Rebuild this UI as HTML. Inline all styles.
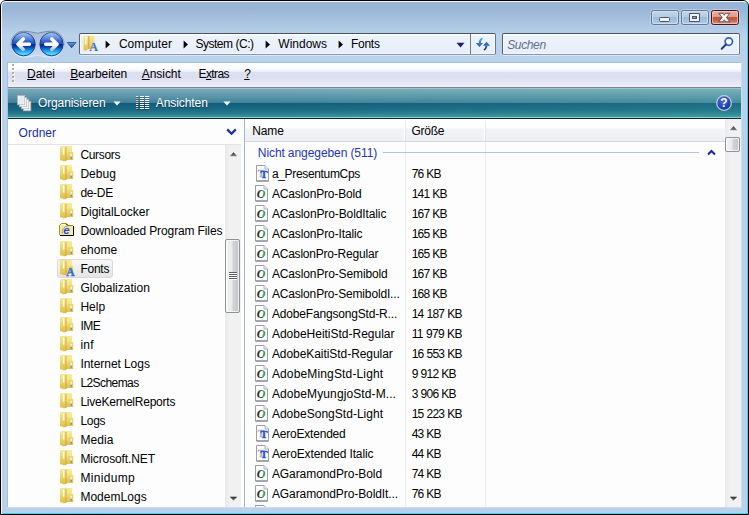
<!DOCTYPE html>
<html lang="de"><head><meta charset="utf-8"><title>Fonts</title><style>
html,body{margin:0;padding:0;background:#fff}
body{width:749px;height:515px;position:relative;overflow:hidden;font:12px 'Liberation Sans',sans-serif}
.abs{position:absolute;display:block}
.t{position:absolute;white-space:pre;line-height:14px;height:14px;font:12px/14px 'Liberation Sans',sans-serif}
.t u{text-decoration:underline;text-underline-offset:1px}
.win{position:absolute;left:0;top:0;width:747px;height:513px;border:1px solid #000;border-radius:6px 6px 0 0;background:linear-gradient(#98b4d4 0,#9ab6d6 8px,#b9d1ea 34px,#b9d1ea 100%)}
.hl{position:absolute;left:1px;top:1px;width:745px;height:511px;border-radius:5px 5px 0 0;border-left:1px solid #f4f8fc;border-top:1px solid #f4f8fc;border-right:1px solid #43d2f0;border-bottom:1px solid #43d2f0}
.addr{position:absolute;box-sizing:border-box;border:1px solid #56627a;border-top-color:#485466;border-right-color:#687488;border-bottom-color:#8b97aa;border-radius:2px;background:linear-gradient(#fbfdff 0,#fbfdff 1px,#ecf2fa 2px,#eaf1fa 50%,#e7eef8 100%);box-shadow:0 1px 0 rgba(255,255,255,.5),inset 1px 0 0 #f7faff,inset -1px 0 0 #f7faff,inset 0 -1px 0 #f4f8fd}
.thumb{position:absolute;border:1px solid #8f9196;border-radius:2px;background:linear-gradient(90deg,#f5f5f5 0,#e9e9ea 45%,#d2d3d6 55%,#c4c5c9 100%);box-shadow:inset 0 0 0 1px rgba(255,255,255,.7)}
.sel{position:absolute;border:1px solid #d9d9d9;border-radius:3px;background:linear-gradient(#f8f8f8,#e5e5e5)}
</style></head><body>
<div class="win"></div>
<div class="hl"></div>
<svg class="abs" style="left:648px;top:7px" width="96" height="22" viewBox="648 7 96 22">
<defs>
<linearGradient id="cb" x1="0" y1="0" x2="0" y2="1"><stop offset="0" stop-color="#c3d6ec"/><stop offset=".48" stop-color="#b3cbe6"/><stop offset=".5" stop-color="#9fbbdb"/><stop offset="1" stop-color="#b0cae6"/></linearGradient>
<linearGradient id="cr" x1="0" y1="0" x2="0" y2="1"><stop offset="0" stop-color="#ebb2a3"/><stop offset=".46" stop-color="#e29a88"/><stop offset=".47" stop-color="#c1583a"/><stop offset=".68" stop-color="#c55f43"/><stop offset=".86" stop-color="#d7846c"/><stop offset="1" stop-color="#e6a392"/></linearGradient>
</defs>
<rect x="650.5" y="9.5" width="29" height="16" rx="3.5" fill="none" stroke="#cfe0f3" stroke-opacity=".55"/>
<rect x="680.5" y="9.5" width="29" height="16" rx="3.5" fill="none" stroke="#cfe0f3" stroke-opacity=".55"/>
<rect x="710.5" y="9.5" width="29" height="16" rx="3.5" fill="none" stroke="#cfe0f3" stroke-opacity=".55"/>
<rect x="651.5" y="10.5" width="27" height="14" rx="2" fill="url(#cb)" stroke="#64748f"/>
<rect x="652.5" y="11.5" width="25" height="12" rx="1.5" fill="none" stroke="#d7e6f6" stroke-opacity=".75"/>
<rect x="681.5" y="10.5" width="27" height="14" rx="2" fill="url(#cb)" stroke="#64748f"/>
<rect x="682.5" y="11.5" width="25" height="12" rx="1.5" fill="none" stroke="#d7e6f6" stroke-opacity=".75"/>
<rect x="711.5" y="10.5" width="27" height="14" rx="2" fill="url(#cr)" stroke="#4b1226"/>
<rect x="712.5" y="11.5" width="25" height="12" rx="1.5" fill="none" stroke="#f5cdbf" stroke-opacity=".7"/>
<rect x="659.5" y="17.5" width="10" height="4" rx="1" fill="#f2f2f2" stroke="#4a5468"/>
<path d="M689.5 13.5h10v8h-10z" fill="#f2f2f2" stroke="#4a5468"/><rect x="692.5" y="16.5" width="4" height="2" fill="#8aa3c4" stroke="#4a5468"/>
<path d="M718.800 13.300h4.300l1.200 1.900 1.200-1.900h4.300l-3.300 4.200 3.400 4.300h-4.300l-1.300-2-1.300 2h-4.300l3.400-4.300z" fill="#f7f7f7" stroke="#454a5e" stroke-width=".9" stroke-linejoin="round"/>
</svg>
<svg class="abs" style="left:6px;top:28px" width="74" height="34" viewBox="6 28 74 34">
<defs>
<linearGradient id="nb" x1="0" y1="0" x2="0" y2="1"><stop offset="0" stop-color="#86aeee"/><stop offset=".1" stop-color="#5b8ce0"/><stop offset=".3" stop-color="#3b6fd2"/><stop offset=".49" stop-color="#2555c0"/><stop offset=".5" stop-color="#0a2488"/><stop offset=".6" stop-color="#0b3aa0"/><stop offset=".74" stop-color="#1488dc"/><stop offset=".88" stop-color="#3cc8fb"/><stop offset="1" stop-color="#7fe8ff"/></linearGradient>
<linearGradient id="ng" x1="0" y1="0" x2="0" y2="1"><stop offset="0" stop-color="#fff" stop-opacity=".4"/><stop offset="1" stop-color="#fff" stop-opacity="0"/></linearGradient>
<linearGradient id="band" x1="0" y1="0" x2="0" y2="1"><stop offset="0" stop-color="#a7bad4"/><stop offset=".5" stop-color="#b6cbe5"/><stop offset="1" stop-color="#cbddf1"/></linearGradient>
<linearGradient id="bs" x1="0" y1="0" x2="0" y2="1"><stop offset="0" stop-color="#74839c"/><stop offset=".5" stop-color="#9db1cb"/><stop offset="1" stop-color="#e3eefa"/></linearGradient>
<linearGradient id="dd" x1="0" y1="0" x2="0" y2="1"><stop offset="0" stop-color="#6aa6ea"/><stop offset="1" stop-color="#143f96"/></linearGradient>
<linearGradient id="aw" x1="0" y1="0" x2="0" y2="1"><stop offset="0" stop-color="#fff"/><stop offset=".55" stop-color="#fff"/><stop offset="1" stop-color="#b9c4d4"/></linearGradient>
</defs>
<path d="M23.600 31.200a13 13 0 0 0 0 26q5.500-.1 13.900-1.800q8.400 1.700 13.900 1.800a13 13 0 0 0 0-26q-5.500 .1-13.900 2q-8.400-1.900-13.900-2z" fill="url(#band)" stroke="url(#bs)" stroke-width=".9"/>
<circle cx="23.600" cy="44.200" r="11.600" fill="url(#nb)" stroke="#1b3c94" stroke-width="1"/>
<path d="M13.300 41.500a10.400 10.400 0 0 1 20.600 0q-10.300 -3 -20.600 0z" fill="url(#ng)"/>
<circle cx="51.500" cy="44.200" r="11.600" fill="url(#nb)" stroke="#1b3c94" stroke-width="1"/>
<path d="M41.200 41.500a10.400 10.400 0 0 1 20.600 0q-10.300 -3 -20.600 0z" fill="url(#ng)"/>
<g fill="none" stroke="url(#aw)" stroke-width="3.500" stroke-linecap="round" stroke-linejoin="round">
<path d="M23.300 38.900l-5.300 5.300 5.300 5.300M19 44.200h10.400"/>
<path d="M51.800 38.900l5.300 5.300-5.300 5.300M56.100 44.200h-10.400"/>
</g>
<path d="M67.300 42.500h8.600l-4.300 5.300z" fill="url(#dd)" stroke="#1c4184" stroke-width=".8"/>
</svg>
<div class="addr" style="left:79px;top:33px;width:417px;height:22px"></div>
<div class="addr" style="left:502px;top:33px;width:238px;height:22px"></div>
<div style="position:absolute;left:470px;top:34px;width:1px;height:20px;background:#6d7a8e"></div>
<svg class="abs" style="left:82px;top:34px" width="18" height="18" viewBox="0 0 18 18">
<defs><linearGradient id="fa" x1="0" y1="0" x2="0" y2="1"><stop offset="0" stop-color="#f6eba0"/><stop offset="1" stop-color="#dfbf48"/></linearGradient></defs>
<path d="M1.500 2.500q0-1 1-1h9q1 0 1 1v12.500h-6.500l-1.500 1.500h-2q-1 0-1-1z" fill="url(#fa)"/>
<path d="M6.800 2v13" stroke="#c9a63c" stroke-width="1"/>
<path d="M3.800 2.500v8" stroke="#fffbe0" stroke-width="1.600" opacity=".9"/>
<text x="7.200" y="16.800" font-family="'Liberation Serif',serif" font-weight="bold" font-size="12" fill="#2f6fe0">A</text>
</svg>
<svg class="abs" style="left:105.4px;top:40px" width="6" height="9" viewBox="0 0 6 9"><path d="M.6.600l4.400 3.900-4.400 3.900z" fill="#000"/></svg>
<svg class="abs" style="left:182.8px;top:40px" width="6" height="9" viewBox="0 0 6 9"><path d="M.6.600l4.400 3.900-4.400 3.900z" fill="#000"/></svg>
<svg class="abs" style="left:265.4px;top:40px" width="6" height="9" viewBox="0 0 6 9"><path d="M.6.600l4.400 3.900-4.400 3.900z" fill="#000"/></svg>
<svg class="abs" style="left:337.8px;top:40px" width="6" height="9" viewBox="0 0 6 9"><path d="M.6.600l4.400 3.900-4.400 3.900z" fill="#000"/></svg>
<span class="t" style="left:118.9px;top:37px;color:#000;letter-spacing:0.056px">Computer</span>
<span class="t" style="left:195.4px;top:37px;color:#000;letter-spacing:-0.480px;word-spacing:0.191px">System (C:)</span>
<span class="t" style="left:278.3px;top:37px;color:#000;letter-spacing:0.006px">Windows</span>
<span class="t" style="left:350.9px;top:37px;color:#000;letter-spacing:-0.236px">Fonts</span>
<svg class="abs" style="left:456px;top:42px" width="9" height="6" viewBox="0 0 9 6"><path d="M.5.800h8l-4 4.600z" fill="#1a1f6e"/></svg>
<svg class="abs" style="left:474px;top:36px" width="18" height="17" viewBox="474 36 18 17">
<defs><linearGradient id="r1" x1="0" y1="0" x2="0" y2="1"><stop offset="0" stop-color="#45a8e8"/><stop offset="1" stop-color="#2a60b8"/></linearGradient>
<linearGradient id="r2" x1="0" y1="0" x2="0" y2="1"><stop offset="0" stop-color="#3572c8"/><stop offset=".6" stop-color="#2858b0"/><stop offset="1" stop-color="#0e1c58"/></linearGradient></defs>
<path d="M475.700 42.900h7.400l-3.700 4.100zM478.600 43.200q.3-4 3.600-5.400l.6 1q-2 1.300-2 4.400z" fill="url(#r1)"/>
<path d="M482.900 45.700h7.200l-3.600-4zM487.500 45.500q-.3 3.700-3.400 5l-.6-.9q2-1.300 2-4.100z" fill="url(#r2)"/>
</svg>
<span class="t" style="left:507.2px;top:38px;color:#5f6f8c;letter-spacing:-0.359px;font-style:italic">Suchen</span>
<svg class="abs" style="left:719px;top:36px" width="16" height="15" viewBox="0 0 16 15">
<circle cx="9.800" cy="5.600" r="3.700" fill="#fff" fill-opacity=".6" stroke="#2f62b4" stroke-width="1.700"/>
<path d="M7 8.500l-4.300 4.300" stroke="#1f3f7c" stroke-width="2" stroke-linecap="round"/>
</svg>
<div style="position:absolute;left:7px;top:62px;width:735px;height:446px;background:#c9dcf2"></div>
<div style="position:absolute;left:7px;top:62px;width:734px;height:445px;background:#a5bedd"></div>
<div style="position:absolute;left:8px;top:63px;width:733px;height:24px;background:linear-gradient(#fff 0,#fdfdfe 5px,#f2f3fa 8px,#dde0f0 9.500px,#dbdeef 14px,#e3e6f3 19px,#ecedf8 23px,#f0f1fa 24px)"></div>
<div style="position:absolute;left:13px;top:65px;width:2px;height:2px;background:#fff"></div>
<div style="position:absolute;left:12px;top:64px;width:2px;height:2px;background:#a9abbb"></div>
<div style="position:absolute;left:13px;top:69px;width:2px;height:2px;background:#fff"></div>
<div style="position:absolute;left:12px;top:68px;width:2px;height:2px;background:#a9abbb"></div>
<div style="position:absolute;left:13px;top:73px;width:2px;height:2px;background:#fff"></div>
<div style="position:absolute;left:12px;top:72px;width:2px;height:2px;background:#a9abbb"></div>
<div style="position:absolute;left:13px;top:77px;width:2px;height:2px;background:#fff"></div>
<div style="position:absolute;left:12px;top:76px;width:2px;height:2px;background:#a9abbb"></div>
<div style="position:absolute;left:13px;top:81px;width:2px;height:2px;background:#fff"></div>
<div style="position:absolute;left:12px;top:80px;width:2px;height:2px;background:#a9abbb"></div>
<span class="t" style="left:27.1px;top:67px;color:#000;letter-spacing:-0.050px"><u>D</u>atei</span>
<span class="t" style="left:70.2px;top:67px;color:#000;letter-spacing:-0.125px"><u>B</u>earbeiten</span>
<span class="t" style="left:141.8px;top:67px;color:#000;letter-spacing:-0.063px"><u>A</u>nsicht</span>
<span class="t" style="left:198.5px;top:67px;color:#000;letter-spacing:-0.604px">E<u>x</u>tras</span>
<span class="t" style="left:244.2px;top:67px;color:#000;letter-spacing:-1.309px"><u>?</u></span>
<div style="position:absolute;left:8px;top:87px;width:733px;height:32px;background:#0a2f40"></div>
<div style="position:absolute;left:8px;top:87px;width:733px;height:1px;background:#85808f"></div>
<div style="position:absolute;left:8px;top:88px;width:733px;height:30px;background:linear-gradient(90deg,rgba(100,215,180,0) 0,rgba(100,215,180,.03) 35%,rgba(100,215,180,.16) 100%),linear-gradient(#9cc5cc 0,#9cc5cc 1px,#7aa8b8 1.500px,#5f97ac 7.500px,#3f8098 14.900px,#0f5878 15px,#1a6a85 22.500px,#2c8090 26.500px,#3a9098 28.500px,#8fcfd2 29px,#8fcfd2 30px)"></div>
<div style="position:absolute;left:8px;top:118px;width:733px;height:1px;background:#0c2b3a"></div>
<svg class="abs" style="left:16px;top:94px" width="17" height="19" viewBox="16 94 17 19">
<defs><linearGradient id="sh" x1="0" y1="0" x2="1" y2="1"><stop offset="0" stop-color="#f4f7fd"/><stop offset=".5" stop-color="#e2e9f6"/><stop offset="1" stop-color="#f1f5fc"/></linearGradient></defs>
<g stroke="#b9b0b4" stroke-width=".8">
<rect x="23.500" y="101.500" width="7.300" height="9.300" fill="#fff"/>
<rect x="21.500" y="99.500" width="7.300" height="9.300" fill="#fff"/>
<rect x="19.500" y="97.500" width="7.300" height="9.300" fill="#fff"/>
<rect x="17.500" y="95.500" width="7.300" height="9.300" fill="url(#sh)"/>
</g></svg>
<span class="t" style="left:37.9px;top:96px;color:#fff;letter-spacing:-0.094px;text-shadow:0 1px 1px rgba(0,30,50,.55)">Organisieren</span>
<svg class="abs" style="left:113px;top:101px" width="8" height="5" viewBox="0 0 8 5"><path d="M.4.400h7.200l-3.600 4.200z" fill="#fff"/></svg>
<svg class="abs" style="left:135px;top:95px" width="16" height="16" viewBox="135 95 16 16"><rect x="136" y="96" width="2.200" height="1" fill="#dbe9c4"/><rect x="140" y="96" width="4" height="1" fill="#fff"/><rect x="145" y="96" width="4.200" height="1" fill="#fff"/><rect x="136" y="97" width="13.200" height="1" fill="#062a44" opacity=".35"/><rect x="136" y="98" width="2.200" height="1" fill="#f19466"/><rect x="140" y="98" width="4" height="1" fill="#fff"/><rect x="145" y="98" width="4.200" height="1" fill="#fff"/><rect x="136" y="99" width="13.200" height="1" fill="#062a44" opacity=".35"/><rect x="136" y="100" width="2.200" height="1" fill="#c3d2f8"/><rect x="140" y="100" width="4" height="1" fill="#fff"/><rect x="145" y="100" width="4.200" height="1" fill="#fff"/><rect x="136" y="101" width="13.200" height="1" fill="#062a44" opacity=".35"/><rect x="136" y="102" width="2.200" height="1" fill="#f1d266"/><rect x="140" y="102" width="4" height="1" fill="#fff"/><rect x="145" y="102" width="4.200" height="1" fill="#fff"/><rect x="136" y="103" width="13.200" height="1" fill="#062a44" opacity=".35"/><rect x="136" y="104" width="2.200" height="1" fill="#f7ee86"/><rect x="140" y="104" width="4" height="1" fill="#fff"/><rect x="145" y="104" width="4.200" height="1" fill="#fff"/><rect x="136" y="105" width="13.200" height="1" fill="#062a44" opacity=".35"/><rect x="136" y="106" width="2.200" height="1" fill="#c9d5f8"/><rect x="140" y="106" width="4" height="1" fill="#fff"/><rect x="145" y="106" width="4.200" height="1" fill="#fff"/><rect x="136" y="107" width="13.200" height="1" fill="#062a44" opacity=".35"/><rect x="136" y="108" width="2.200" height="1" fill="#f19a72"/><rect x="140" y="108" width="4" height="1" fill="#fff"/><rect x="145" y="108" width="4.200" height="1" fill="#fff"/><rect x="136" y="109" width="13.200" height="1" fill="#062a44" opacity=".35"/></svg>
<span class="t" style="left:155.8px;top:96px;color:#fff;letter-spacing:-0.081px;text-shadow:0 1px 1px rgba(0,30,50,.55)">Ansichten</span>
<svg class="abs" style="left:223px;top:101px" width="8" height="5" viewBox="0 0 8 5"><path d="M.4.400h7.200l-3.600 4.200z" fill="#fff"/></svg>
<svg class="abs" style="left:715px;top:94px" width="18" height="18" viewBox="0 0 18 18">
<defs><radialGradient id="hg" cx=".4" cy=".3" r=".8"><stop offset="0" stop-color="#4a6fe0"/><stop offset="1" stop-color="#0c2a9a"/></radialGradient></defs>
<circle cx="9" cy="9" r="7.300" fill="url(#hg)" stroke="#c9cfd6" stroke-width="1.200"/>
<text x="9" y="13.200" text-anchor="middle" font-family="'Liberation Sans',sans-serif" font-weight="bold" font-size="12" fill="#fff">?</text>
</svg>
<div style="position:absolute;left:8px;top:119px;width:733px;height:388px;background:#fdfdfd"></div>
<span class="t" style="left:18.6px;top:126px;color:#1c2fa3;letter-spacing:0.024px">Ordner</span>
<svg class="abs" style="left:226px;top:128px" width="11" height="8" viewBox="0 0 11 8"><path d="M1.200 1.400l4.300 4.300 4.300-4.300" fill="none" stroke="#1b2b9b" stroke-width="2.200"/></svg>
<div style="position:absolute;left:8px;top:144px;width:233px;height:1px;background:#e2e3e6"></div>
<div style="position:absolute;left:244px;top:119px;width:1px;height:388px;background:#a5b6cc"></div>
<div style="position:absolute;left:225px;top:145px;width:16px;height:362px;background:linear-gradient(90deg,#e9e9e9,#f1f1f1 30%,#f1f1f1)"></div>
<svg class="abs" style="left:229px;top:151px" width="9" height="6" viewBox="0 0 9 6"><defs><linearGradient id="ar" x1="0" y1="0" x2="0" y2="1"><stop offset="0" stop-color="#222"/><stop offset="1" stop-color="#888"/></linearGradient></defs><path d="M4.500 1.200l3.700 4h-7.400z" fill="url(#ar)"/></svg>
<svg class="abs" style="left:229px;top:496px" width="9" height="6" viewBox="0 0 9 6"><defs><linearGradient id="ar2" x1="0" y1="0" x2="0" y2="1"><stop offset="0" stop-color="#222"/><stop offset="1" stop-color="#999"/></linearGradient></defs><path d="M.8.800h7.400l-3.700 4z" fill="url(#ar2)"/></svg>
<div class="thumb" style="left:225px;top:239px;width:13px;height:71.500px"></div>
<div style="position:absolute;left:229px;top:272px;width:8px;height:1px;background:#5e6068"></div>
<div style="position:absolute;left:229px;top:273px;width:8px;height:1px;background:#f8f8f8"></div>
<div style="position:absolute;left:229px;top:274px;width:8px;height:1px;background:#5e6068"></div>
<div style="position:absolute;left:229px;top:275px;width:8px;height:1px;background:#f8f8f8"></div>
<div style="position:absolute;left:229px;top:276px;width:8px;height:1px;background:#5e6068"></div>
<div style="position:absolute;left:229px;top:277px;width:8px;height:1px;background:#f8f8f8"></div>
<div style="position:absolute;left:229px;top:278px;width:8px;height:1px;background:#5e6068"></div>
<div style="position:absolute;left:229px;top:279px;width:8px;height:1px;background:#f8f8f8"></div>
<svg class="abs" style="left:59px;top:145px" width="16" height="18" viewBox="0 0 16 18">
<path d="M1 2q0-1 1-1h10q1 0 1 1v4.800h.6q.6 0 .6.600v7q0 .6-.6.600h-6l-1.400 1.200h-2l-.8-.7h-1.400q-1 0-1-1z" fill="url(#fb)"/>
<path d="M7.600 1.200h4.600q.8 0 .8.800v5h-5.400z" fill="#fdf7b0" opacity=".35"/>
<path d="M7 2v14" stroke="#c4a238" stroke-width="1" opacity=".8"/>
<path d="M4.600 2.300v7.300" stroke="#fffef4" stroke-width="1.500" opacity=".95"/>
<path d="M8.200 2.500v8" stroke="#f6e89a" stroke-width=".7" opacity=".8"/>
<rect x="11.600" y="8.800" width="1.100" height="3" fill="#fff"/><rect x="11.600" y="11.600" width="1.100" height="2.200" fill="#2a8fe6"/>
</svg>
<span class="t" style="left:80.4px;top:148px;color:#000;letter-spacing:-0.320px">Cursors</span>
<svg class="abs" style="left:59px;top:164px" width="16" height="18" viewBox="0 0 16 18">
<path d="M1 2q0-1 1-1h10q1 0 1 1v4.800h.6q.6 0 .6.600v7q0 .6-.6.600h-6l-1.400 1.200h-2l-.8-.7h-1.400q-1 0-1-1z" fill="url(#fb)"/>
<path d="M7.600 1.200h4.600q.8 0 .8.800v5h-5.400z" fill="#fdf7b0" opacity=".35"/>
<path d="M7 2v14" stroke="#c4a238" stroke-width="1" opacity=".8"/>
<path d="M4.600 2.300v7.300" stroke="#fffef4" stroke-width="1.500" opacity=".95"/>
<path d="M8.200 2.500v8" stroke="#f6e89a" stroke-width=".7" opacity=".8"/>
<rect x="11.600" y="8.800" width="1.100" height="3" fill="#fff"/><rect x="11.600" y="11.600" width="1.100" height="2.200" fill="#2a8fe6"/>
</svg>
<span class="t" style="left:80.4px;top:167px;color:#000;letter-spacing:0.042px">Debug</span>
<svg class="abs" style="left:59px;top:183px" width="16" height="18" viewBox="0 0 16 18">
<path d="M1 2q0-1 1-1h10q1 0 1 1v4.800h.6q.6 0 .6.600v7q0 .6-.6.600h-6l-1.400 1.200h-2l-.8-.7h-1.400q-1 0-1-1z" fill="url(#fb)"/>
<path d="M7.600 1.200h4.600q.8 0 .8.800v5h-5.400z" fill="#fdf7b0" opacity=".35"/>
<path d="M7 2v14" stroke="#c4a238" stroke-width="1" opacity=".8"/>
<path d="M4.600 2.300v7.300" stroke="#fffef4" stroke-width="1.500" opacity=".95"/>
<path d="M8.200 2.500v8" stroke="#f6e89a" stroke-width=".7" opacity=".8"/>
<rect x="11.600" y="8.800" width="1.100" height="3" fill="#fff"/><rect x="11.600" y="11.600" width="1.100" height="2.200" fill="#2a8fe6"/>
</svg>
<span class="t" style="left:80.4px;top:186px;color:#000;letter-spacing:-0.311px">de-DE</span>
<svg class="abs" style="left:59px;top:202px" width="16" height="18" viewBox="0 0 16 18">
<path d="M1 2q0-1 1-1h10q1 0 1 1v4.800h.6q.6 0 .6.600v7q0 .6-.6.600h-6l-1.400 1.200h-2l-.8-.7h-1.400q-1 0-1-1z" fill="url(#fb)"/>
<path d="M7.600 1.200h4.600q.8 0 .8.800v5h-5.400z" fill="#fdf7b0" opacity=".35"/>
<path d="M7 2v14" stroke="#c4a238" stroke-width="1" opacity=".8"/>
<path d="M4.600 2.300v7.300" stroke="#fffef4" stroke-width="1.500" opacity=".95"/>
<path d="M8.200 2.500v8" stroke="#f6e89a" stroke-width=".7" opacity=".8"/>
<rect x="11.600" y="8.800" width="1.100" height="3" fill="#fff"/><rect x="11.600" y="11.600" width="1.100" height="2.200" fill="#2a8fe6"/>
</svg>
<span class="t" style="left:80.4px;top:205px;color:#000;letter-spacing:-0.030px">DigitalLocker</span>
<svg class="abs" style="left:58px;top:221px" width="17" height="16" viewBox="58 221 17 16">
<path d="M59.500 235v-9.500l2-2h4.500l1.500 2h5.500v9.500z" fill="#f8ea94"/>
<path d="M68 226h5v9h-5z" fill="#fde9b4" opacity=".7"/>
<path d="M59.500 235v-9.500l2-2h4.500l1.500 2h5.500" fill="none" stroke="#a39a14" stroke-width="1"/>
<path d="M61.500 224.500h4" stroke="#fffef0" stroke-width="1"/>
<path d="M73.500 226v9.500h-13.500" fill="none" stroke="#000" stroke-width="1"/>
<path d="M66.300 223.600l1.400 1.700" stroke="#000" stroke-width="1"/>
<text x="63.200" y="233.800" font-family="'Liberation Sans',sans-serif" font-weight="bold" font-style="italic" font-size="11.500" fill="#1d4fd8">e</text>
<path d="M62.300 233.500q-.8-3.500 2.200-6q2.800-2 5.800-1.600" fill="none" stroke="#2a4fc0" stroke-width=".8" stroke-dasharray="1.200 .8"/>
</svg>
<span class="t" style="left:80.4px;top:224px;color:#000;letter-spacing:-0.097px;word-spacing:-0.192px">Downloaded Program Files</span>
<svg class="abs" style="left:59px;top:240px" width="16" height="18" viewBox="0 0 16 18">
<path d="M1 2q0-1 1-1h10q1 0 1 1v4.800h.6q.6 0 .6.600v7q0 .6-.6.600h-6l-1.400 1.200h-2l-.8-.7h-1.400q-1 0-1-1z" fill="url(#fb)"/>
<path d="M7.600 1.200h4.600q.8 0 .8.800v5h-5.400z" fill="#fdf7b0" opacity=".35"/>
<path d="M7 2v14" stroke="#c4a238" stroke-width="1" opacity=".8"/>
<path d="M4.600 2.300v7.300" stroke="#fffef4" stroke-width="1.500" opacity=".95"/>
<path d="M8.200 2.500v8" stroke="#f6e89a" stroke-width=".7" opacity=".8"/>
<rect x="11.600" y="8.800" width="1.100" height="3" fill="#fff"/><rect x="11.600" y="11.600" width="1.100" height="2.200" fill="#2a8fe6"/>
</svg>
<span class="t" style="left:80.4px;top:243px;color:#000;letter-spacing:-0.002px">ehome</span>
<div class="sel" style="left:57px;top:259px;width:54px;height:17px"></div>
<svg class="abs" style="left:59px;top:259px" width="16" height="18" viewBox="0 0 16 18">
<path d="M1 2q0-1 1-1h10q1 0 1 1v4.800h.6q.6 0 .6.600v7q0 .6-.6.600h-6l-1.400 1.200h-2l-.8-.7h-1.400q-1 0-1-1z" fill="url(#fb)"/>
<path d="M7.600 1.200h4.600q.8 0 .8.800v5h-5.400z" fill="#fdf7b0" opacity=".35"/>
<path d="M7 2v14" stroke="#c4a238" stroke-width="1" opacity=".8"/>
<path d="M4.600 2.300v7.300" stroke="#fffef4" stroke-width="1.500" opacity=".95"/>
<path d="M8.200 2.500v8" stroke="#f6e89a" stroke-width=".7" opacity=".8"/>
<rect x="11.600" y="8.800" width="1.100" height="3" fill="#fff"/><rect x="11.600" y="11.600" width="1.100" height="2.200" fill="#2a8fe6"/>
<text x="7.200" y="16.900" font-family="'Liberation Serif',serif" font-weight="bold" font-size="11.500" fill="#2f6fe0" stroke="#2f6fe0" stroke-width=".3">A</text></svg>
<span class="t" style="left:80.4px;top:262px;color:#000;letter-spacing:-0.236px">Fonts</span>
<svg class="abs" style="left:59px;top:278px" width="16" height="18" viewBox="0 0 16 18">
<path d="M1 2q0-1 1-1h10q1 0 1 1v4.800h.6q.6 0 .6.600v7q0 .6-.6.600h-6l-1.400 1.200h-2l-.8-.7h-1.400q-1 0-1-1z" fill="url(#fb)"/>
<path d="M7.600 1.200h4.600q.8 0 .8.800v5h-5.400z" fill="#fdf7b0" opacity=".35"/>
<path d="M7 2v14" stroke="#c4a238" stroke-width="1" opacity=".8"/>
<path d="M4.600 2.300v7.300" stroke="#fffef4" stroke-width="1.500" opacity=".95"/>
<path d="M8.200 2.500v8" stroke="#f6e89a" stroke-width=".7" opacity=".8"/>
<rect x="11.600" y="8.800" width="1.100" height="3" fill="#fff"/><rect x="11.600" y="11.600" width="1.100" height="2.200" fill="#2a8fe6"/>
</svg>
<span class="t" style="left:80.4px;top:281px;color:#000;letter-spacing:0.007px">Globalization</span>
<svg class="abs" style="left:59px;top:297px" width="16" height="18" viewBox="0 0 16 18">
<path d="M1 2q0-1 1-1h10q1 0 1 1v4.800h.6q.6 0 .6.600v7q0 .6-.6.600h-6l-1.400 1.200h-2l-.8-.7h-1.400q-1 0-1-1z" fill="url(#fb)"/>
<path d="M7.600 1.200h4.600q.8 0 .8.800v5h-5.400z" fill="#fdf7b0" opacity=".35"/>
<path d="M7 2v14" stroke="#c4a238" stroke-width="1" opacity=".8"/>
<path d="M4.600 2.300v7.300" stroke="#fffef4" stroke-width="1.500" opacity=".95"/>
<path d="M8.200 2.500v8" stroke="#f6e89a" stroke-width=".7" opacity=".8"/>
<rect x="11.600" y="8.800" width="1.100" height="3" fill="#fff"/><rect x="11.600" y="11.600" width="1.100" height="2.200" fill="#2a8fe6"/>
</svg>
<span class="t" style="left:80.4px;top:300px;color:#000;letter-spacing:0.017px">Help</span>
<svg class="abs" style="left:59px;top:316px" width="16" height="18" viewBox="0 0 16 18">
<path d="M1 2q0-1 1-1h10q1 0 1 1v4.800h.6q.6 0 .6.600v7q0 .6-.6.600h-6l-1.400 1.200h-2l-.8-.7h-1.400q-1 0-1-1z" fill="url(#fb)"/>
<path d="M7.600 1.200h4.600q.8 0 .8.800v5h-5.400z" fill="#fdf7b0" opacity=".35"/>
<path d="M7 2v14" stroke="#c4a238" stroke-width="1" opacity=".8"/>
<path d="M4.600 2.300v7.300" stroke="#fffef4" stroke-width="1.500" opacity=".95"/>
<path d="M8.200 2.500v8" stroke="#f6e89a" stroke-width=".7" opacity=".8"/>
<rect x="11.600" y="8.800" width="1.100" height="3" fill="#fff"/><rect x="11.600" y="11.600" width="1.100" height="2.200" fill="#2a8fe6"/>
</svg>
<span class="t" style="left:80.4px;top:319px;color:#000;letter-spacing:-0.486px">IME</span>
<svg class="abs" style="left:59px;top:335px" width="16" height="18" viewBox="0 0 16 18">
<path d="M1 2q0-1 1-1h10q1 0 1 1v4.800h.6q.6 0 .6.600v7q0 .6-.6.600h-6l-1.400 1.200h-2l-.8-.7h-1.400q-1 0-1-1z" fill="url(#fb)"/>
<path d="M7.600 1.200h4.600q.8 0 .8.800v5h-5.400z" fill="#fdf7b0" opacity=".35"/>
<path d="M7 2v14" stroke="#c4a238" stroke-width="1" opacity=".8"/>
<path d="M4.600 2.300v7.300" stroke="#fffef4" stroke-width="1.500" opacity=".95"/>
<path d="M8.200 2.500v8" stroke="#f6e89a" stroke-width=".7" opacity=".8"/>
<rect x="11.600" y="8.800" width="1.100" height="3" fill="#fff"/><rect x="11.600" y="11.600" width="1.100" height="2.200" fill="#2a8fe6"/>
</svg>
<span class="t" style="left:80.4px;top:338px;color:#000;letter-spacing:0.253px">inf</span>
<svg class="abs" style="left:59px;top:354px" width="16" height="18" viewBox="0 0 16 18">
<path d="M1 2q0-1 1-1h10q1 0 1 1v4.800h.6q.6 0 .6.600v7q0 .6-.6.600h-6l-1.400 1.200h-2l-.8-.7h-1.400q-1 0-1-1z" fill="url(#fb)"/>
<path d="M7.600 1.200h4.600q.8 0 .8.800v5h-5.400z" fill="#fdf7b0" opacity=".35"/>
<path d="M7 2v14" stroke="#c4a238" stroke-width="1" opacity=".8"/>
<path d="M4.600 2.300v7.300" stroke="#fffef4" stroke-width="1.500" opacity=".95"/>
<path d="M8.200 2.500v8" stroke="#f6e89a" stroke-width=".7" opacity=".8"/>
<rect x="11.600" y="8.800" width="1.100" height="3" fill="#fff"/><rect x="11.600" y="11.600" width="1.100" height="2.200" fill="#2a8fe6"/>
</svg>
<span class="t" style="left:80.4px;top:357px;color:#000;letter-spacing:-0.024px;word-spacing:-0.265px">Internet Logs</span>
<svg class="abs" style="left:59px;top:373px" width="16" height="18" viewBox="0 0 16 18">
<path d="M1 2q0-1 1-1h10q1 0 1 1v4.800h.6q.6 0 .6.600v7q0 .6-.6.600h-6l-1.400 1.200h-2l-.8-.7h-1.400q-1 0-1-1z" fill="url(#fb)"/>
<path d="M7.600 1.200h4.600q.8 0 .8.800v5h-5.400z" fill="#fdf7b0" opacity=".35"/>
<path d="M7 2v14" stroke="#c4a238" stroke-width="1" opacity=".8"/>
<path d="M4.600 2.300v7.300" stroke="#fffef4" stroke-width="1.500" opacity=".95"/>
<path d="M8.200 2.500v8" stroke="#f6e89a" stroke-width=".7" opacity=".8"/>
<rect x="11.600" y="8.800" width="1.100" height="3" fill="#fff"/><rect x="11.600" y="11.600" width="1.100" height="2.200" fill="#2a8fe6"/>
</svg>
<span class="t" style="left:80.4px;top:376px;color:#000;letter-spacing:-0.577px">L2Schemas</span>
<svg class="abs" style="left:59px;top:392px" width="16" height="18" viewBox="0 0 16 18">
<path d="M1 2q0-1 1-1h10q1 0 1 1v4.800h.6q.6 0 .6.600v7q0 .6-.6.600h-6l-1.400 1.200h-2l-.8-.7h-1.400q-1 0-1-1z" fill="url(#fb)"/>
<path d="M7.600 1.200h4.600q.8 0 .8.800v5h-5.400z" fill="#fdf7b0" opacity=".35"/>
<path d="M7 2v14" stroke="#c4a238" stroke-width="1" opacity=".8"/>
<path d="M4.600 2.300v7.300" stroke="#fffef4" stroke-width="1.500" opacity=".95"/>
<path d="M8.200 2.500v8" stroke="#f6e89a" stroke-width=".7" opacity=".8"/>
<rect x="11.600" y="8.800" width="1.100" height="3" fill="#fff"/><rect x="11.600" y="11.600" width="1.100" height="2.200" fill="#2a8fe6"/>
</svg>
<span class="t" style="left:80.4px;top:395px;color:#000;letter-spacing:-0.230px">LiveKernelReports</span>
<svg class="abs" style="left:59px;top:411px" width="16" height="18" viewBox="0 0 16 18">
<path d="M1 2q0-1 1-1h10q1 0 1 1v4.800h.6q.6 0 .6.600v7q0 .6-.6.600h-6l-1.400 1.200h-2l-.8-.7h-1.400q-1 0-1-1z" fill="url(#fb)"/>
<path d="M7.600 1.200h4.600q.8 0 .8.800v5h-5.400z" fill="#fdf7b0" opacity=".35"/>
<path d="M7 2v14" stroke="#c4a238" stroke-width="1" opacity=".8"/>
<path d="M4.600 2.300v7.300" stroke="#fffef4" stroke-width="1.500" opacity=".95"/>
<path d="M8.200 2.500v8" stroke="#f6e89a" stroke-width=".7" opacity=".8"/>
<rect x="11.600" y="8.800" width="1.100" height="3" fill="#fff"/><rect x="11.600" y="11.600" width="1.100" height="2.200" fill="#2a8fe6"/>
</svg>
<span class="t" style="left:80.4px;top:414px;color:#000;letter-spacing:-0.303px">Logs</span>
<svg class="abs" style="left:59px;top:430px" width="16" height="18" viewBox="0 0 16 18">
<path d="M1 2q0-1 1-1h10q1 0 1 1v4.800h.6q.6 0 .6.600v7q0 .6-.6.600h-6l-1.400 1.200h-2l-.8-.7h-1.400q-1 0-1-1z" fill="url(#fb)"/>
<path d="M7.600 1.200h4.600q.8 0 .8.800v5h-5.400z" fill="#fdf7b0" opacity=".35"/>
<path d="M7 2v14" stroke="#c4a238" stroke-width="1" opacity=".8"/>
<path d="M4.600 2.300v7.300" stroke="#fffef4" stroke-width="1.500" opacity=".95"/>
<path d="M8.200 2.500v8" stroke="#f6e89a" stroke-width=".7" opacity=".8"/>
<rect x="11.600" y="8.800" width="1.100" height="3" fill="#fff"/><rect x="11.600" y="11.600" width="1.100" height="2.200" fill="#2a8fe6"/>
</svg>
<span class="t" style="left:80.4px;top:433px;color:#000;letter-spacing:0.086px">Media</span>
<svg class="abs" style="left:59px;top:449px" width="16" height="18" viewBox="0 0 16 18">
<path d="M1 2q0-1 1-1h10q1 0 1 1v4.800h.6q.6 0 .6.600v7q0 .6-.6.600h-6l-1.400 1.200h-2l-.8-.7h-1.400q-1 0-1-1z" fill="url(#fb)"/>
<path d="M7.600 1.200h4.600q.8 0 .8.800v5h-5.400z" fill="#fdf7b0" opacity=".35"/>
<path d="M7 2v14" stroke="#c4a238" stroke-width="1" opacity=".8"/>
<path d="M4.600 2.300v7.300" stroke="#fffef4" stroke-width="1.500" opacity=".95"/>
<path d="M8.200 2.500v8" stroke="#f6e89a" stroke-width=".7" opacity=".8"/>
<rect x="11.600" y="8.800" width="1.100" height="3" fill="#fff"/><rect x="11.600" y="11.600" width="1.100" height="2.200" fill="#2a8fe6"/>
</svg>
<span class="t" style="left:80.4px;top:452px;color:#000;letter-spacing:-0.118px">Microsoft.NET</span>
<svg class="abs" style="left:59px;top:468px" width="16" height="18" viewBox="0 0 16 18">
<path d="M1 2q0-1 1-1h10q1 0 1 1v4.800h.6q.6 0 .6.600v7q0 .6-.6.600h-6l-1.400 1.200h-2l-.8-.7h-1.400q-1 0-1-1z" fill="url(#fb)"/>
<path d="M7.600 1.200h4.600q.8 0 .8.800v5h-5.400z" fill="#fdf7b0" opacity=".35"/>
<path d="M7 2v14" stroke="#c4a238" stroke-width="1" opacity=".8"/>
<path d="M4.600 2.300v7.300" stroke="#fffef4" stroke-width="1.500" opacity=".95"/>
<path d="M8.200 2.500v8" stroke="#f6e89a" stroke-width=".7" opacity=".8"/>
<rect x="11.600" y="8.800" width="1.100" height="3" fill="#fff"/><rect x="11.600" y="11.600" width="1.100" height="2.200" fill="#2a8fe6"/>
</svg>
<span class="t" style="left:80.4px;top:471px;color:#000;letter-spacing:0.320px">Minidump</span>
<svg class="abs" style="left:59px;top:487px" width="16" height="18" viewBox="0 0 16 18">
<path d="M1 2q0-1 1-1h10q1 0 1 1v4.800h.6q.6 0 .6.600v7q0 .6-.6.600h-6l-1.400 1.200h-2l-.8-.7h-1.400q-1 0-1-1z" fill="url(#fb)"/>
<path d="M7.600 1.200h4.600q.8 0 .8.800v5h-5.400z" fill="#fdf7b0" opacity=".35"/>
<path d="M7 2v14" stroke="#c4a238" stroke-width="1" opacity=".8"/>
<path d="M4.600 2.300v7.300" stroke="#fffef4" stroke-width="1.500" opacity=".95"/>
<path d="M8.200 2.500v8" stroke="#f6e89a" stroke-width=".7" opacity=".8"/>
<rect x="11.600" y="8.800" width="1.100" height="3" fill="#fff"/><rect x="11.600" y="11.600" width="1.100" height="2.200" fill="#2a8fe6"/>
</svg>
<span class="t" style="left:80.4px;top:490px;color:#000;letter-spacing:0.026px">ModemLogs</span>
<div style="position:absolute;left:245px;top:119px;width:480px;height:22px;background:linear-gradient(#fff 0,#fff 40%,#f2f3f7 45%,#eff0f5 100%)"></div>
<div style="position:absolute;left:245px;top:141px;width:480px;height:1px;background:#d6d7da"></div>
<div style="position:absolute;left:405px;top:119px;width:1px;height:22px;background:linear-gradient(#f4f4f6,#d8d9dd)"></div>
<div style="position:absolute;left:404px;top:119px;width:1px;height:22px;background:#fff"></div>
<div style="position:absolute;left:405px;top:142px;width:1px;height:365px;background:#efeff0"></div>
<div style="position:absolute;left:485px;top:119px;width:1px;height:22px;background:linear-gradient(#f4f4f6,#d8d9dd)"></div>
<div style="position:absolute;left:484px;top:119px;width:1px;height:22px;background:#fff"></div>
<div style="position:absolute;left:485px;top:142px;width:1px;height:365px;background:#efeff0"></div>
<span class="t" style="left:252.2px;top:124px;color:#000;letter-spacing:-0.083px">Name</span>
<span class="t" style="left:411.5px;top:124px;color:#000;letter-spacing:-0.290px">Größe</span>
<span class="t" style="left:257.8px;top:146px;color:#1e35ad;letter-spacing:-0.065px;word-spacing:-0.224px">Nicht angegeben (511)</span>
<div style="position:absolute;left:383px;top:152px;width:316px;height:1px;background:#b4c3e6"></div>
<svg class="abs" style="left:707px;top:149px" width="9" height="7" viewBox="0 0 9 7"><path d="M1 5.600l3.500-3.600 3.500 3.600" fill="none" stroke="#1b2b9b" stroke-width="2.100"/></svg>
<svg class="abs" width="0" height="0"><defs><linearGradient id="fb" x1="0" y1="0" x2="0" y2="1"><stop offset="0" stop-color="#f5e88e"/><stop offset=".5" stop-color="#ecd568"/><stop offset="1" stop-color="#e0bd46"/></linearGradient><linearGradient id="og" x1="0" y1="0" x2="1" y2="0"><stop offset="0" stop-color="#222"/><stop offset=".5" stop-color="#333"/><stop offset=".6" stop-color="#2f9a4a"/><stop offset="1" stop-color="#2f9a4a"/></linearGradient></defs></svg>
<svg class="abs" style="left:255px;top:165px" width="15" height="17" viewBox="0 0 15 17">
<path d="M1.500.500h8.500l3.500 3.500v12h-12z" fill="#fff" stroke="#9ba0a8"/>
<path d="M1.500 16h12" stroke="#747c88" stroke-width="1"/>
<path d="M10 .500v3.500h3.500" fill="#f2f4f8" stroke="#9ba0a8" stroke-width=".8"/>
<text x="2.800" y="11.900" font-family="'Liberation Serif',serif" font-weight="bold" font-size="10" fill="#b4b4b8" stroke="#b4b4b8" stroke-width=".3">T</text>
<text x="5.600" y="13" font-family="'Liberation Serif',serif" font-weight="bold" font-size="10.500" fill="#2a4fd2" stroke="#2a4fd2" stroke-width=".45">T</text>
</svg>
<span class="t" style="left:271.9px;top:167px;color:#000;letter-spacing:-0.334px">a_PresentumCps</span>
<span class="t" style="left:411.7px;top:167px;color:#000;letter-spacing:-0.864px;word-spacing:0.575px">76 KB</span>
<svg class="abs" style="opacity:.999;left:254px;top:185px" width="15" height="17" viewBox="0 0 15 17">
<path d="M1.500.500h8.500l3.500 3.500v12h-12z" fill="#fff" stroke="#9ba0a8"/>
<path d="M1.500 16h12" stroke="#747c88" stroke-width="1"/>
<path d="M10 .500v3.500h3.500" fill="#f2f4f8" stroke="#9ba0a8" stroke-width=".8"/>
<text x="2.800" y="13.200" font-family="'Liberation Serif',serif" font-style="italic" font-weight="bold" font-size="12" fill="url(#og)">O</text>
</svg>
<span class="t" style="left:271.9px;top:187px;color:#000;letter-spacing:-0.158px">ACaslonPro-Bold</span>
<span class="t" style="left:411.7px;top:187px;color:#000;letter-spacing:-0.819px;word-spacing:0.530px">141 KB</span>
<svg class="abs" style="opacity:.999;left:254px;top:205px" width="15" height="17" viewBox="0 0 15 17">
<path d="M1.500.500h8.500l3.500 3.500v12h-12z" fill="#fff" stroke="#9ba0a8"/>
<path d="M1.500 16h12" stroke="#747c88" stroke-width="1"/>
<path d="M10 .500v3.500h3.500" fill="#f2f4f8" stroke="#9ba0a8" stroke-width=".8"/>
<text x="2.800" y="13.200" font-family="'Liberation Serif',serif" font-style="italic" font-weight="bold" font-size="12" fill="url(#og)">O</text>
</svg>
<span class="t" style="left:271.9px;top:207px;color:#000;letter-spacing:-0.110px">ACaslonPro-BoldItalic</span>
<span class="t" style="left:411.7px;top:207px;color:#000;letter-spacing:-0.819px;word-spacing:0.530px">167 KB</span>
<svg class="abs" style="opacity:.999;left:254px;top:225px" width="15" height="17" viewBox="0 0 15 17">
<path d="M1.500.500h8.500l3.500 3.500v12h-12z" fill="#fff" stroke="#9ba0a8"/>
<path d="M1.500 16h12" stroke="#747c88" stroke-width="1"/>
<path d="M10 .500v3.500h3.500" fill="#f2f4f8" stroke="#9ba0a8" stroke-width=".8"/>
<text x="2.800" y="13.200" font-family="'Liberation Serif',serif" font-style="italic" font-weight="bold" font-size="12" fill="url(#og)">O</text>
</svg>
<span class="t" style="left:271.9px;top:227px;color:#000;letter-spacing:-0.128px">ACaslonPro-Italic</span>
<span class="t" style="left:411.7px;top:227px;color:#000;letter-spacing:-0.819px;word-spacing:0.530px">165 KB</span>
<svg class="abs" style="opacity:.999;left:254px;top:245px" width="15" height="17" viewBox="0 0 15 17">
<path d="M1.500.500h8.500l3.500 3.500v12h-12z" fill="#fff" stroke="#9ba0a8"/>
<path d="M1.500 16h12" stroke="#747c88" stroke-width="1"/>
<path d="M10 .500v3.500h3.500" fill="#f2f4f8" stroke="#9ba0a8" stroke-width=".8"/>
<text x="2.800" y="13.200" font-family="'Liberation Serif',serif" font-style="italic" font-weight="bold" font-size="12" fill="url(#og)">O</text>
</svg>
<span class="t" style="left:271.9px;top:247px;color:#000;letter-spacing:-0.210px">ACaslonPro-Regular</span>
<span class="t" style="left:411.7px;top:247px;color:#000;letter-spacing:-0.819px;word-spacing:0.530px">165 KB</span>
<svg class="abs" style="opacity:.999;left:254px;top:265px" width="15" height="17" viewBox="0 0 15 17">
<path d="M1.500.500h8.500l3.500 3.500v12h-12z" fill="#fff" stroke="#9ba0a8"/>
<path d="M1.500 16h12" stroke="#747c88" stroke-width="1"/>
<path d="M10 .500v3.500h3.500" fill="#f2f4f8" stroke="#9ba0a8" stroke-width=".8"/>
<text x="2.800" y="13.200" font-family="'Liberation Serif',serif" font-style="italic" font-weight="bold" font-size="12" fill="url(#og)">O</text>
</svg>
<span class="t" style="left:271.9px;top:267px;color:#000;letter-spacing:-0.122px">ACaslonPro-Semibold</span>
<span class="t" style="left:411.7px;top:267px;color:#000;letter-spacing:-0.819px;word-spacing:0.530px">167 KB</span>
<svg class="abs" style="opacity:.999;left:254px;top:285px" width="15" height="17" viewBox="0 0 15 17">
<path d="M1.500.500h8.500l3.500 3.500v12h-12z" fill="#fff" stroke="#9ba0a8"/>
<path d="M1.500 16h12" stroke="#747c88" stroke-width="1"/>
<path d="M10 .500v3.500h3.500" fill="#f2f4f8" stroke="#9ba0a8" stroke-width=".8"/>
<text x="2.800" y="13.200" font-family="'Liberation Serif',serif" font-style="italic" font-weight="bold" font-size="12" fill="url(#og)">O</text>
</svg>
<span class="t" style="left:271.9px;top:287px;color:#000;letter-spacing:-0.159px">ACaslonPro-SemiboldI...</span>
<span class="t" style="left:411.7px;top:287px;color:#000;letter-spacing:-0.819px;word-spacing:0.530px">168 KB</span>
<svg class="abs" style="opacity:.999;left:254px;top:305px" width="15" height="17" viewBox="0 0 15 17">
<path d="M1.500.500h8.500l3.500 3.500v12h-12z" fill="#fff" stroke="#9ba0a8"/>
<path d="M1.500 16h12" stroke="#747c88" stroke-width="1"/>
<path d="M10 .500v3.500h3.500" fill="#f2f4f8" stroke="#9ba0a8" stroke-width=".8"/>
<text x="2.800" y="13.200" font-family="'Liberation Serif',serif" font-style="italic" font-weight="bold" font-size="12" fill="url(#og)">O</text>
</svg>
<span class="t" style="left:271.9px;top:307px;color:#000;letter-spacing:-0.170px">AdobeFangsongStd-R...</span>
<span class="t" style="left:411.7px;top:307px;color:#000;letter-spacing:-0.766px;word-spacing:0.476px">14 187 KB</span>
<svg class="abs" style="opacity:.999;left:254px;top:325px" width="15" height="17" viewBox="0 0 15 17">
<path d="M1.500.500h8.500l3.500 3.500v12h-12z" fill="#fff" stroke="#9ba0a8"/>
<path d="M1.500 16h12" stroke="#747c88" stroke-width="1"/>
<path d="M10 .500v3.500h3.500" fill="#f2f4f8" stroke="#9ba0a8" stroke-width=".8"/>
<text x="2.800" y="13.200" font-family="'Liberation Serif',serif" font-style="italic" font-weight="bold" font-size="12" fill="url(#og)">O</text>
</svg>
<span class="t" style="left:271.9px;top:327px;color:#000;letter-spacing:-0.007px">AdobeHeitiStd-Regular</span>
<span class="t" style="left:411.7px;top:327px;color:#000;letter-spacing:-0.638px;word-spacing:0.349px">11 979 KB</span>
<svg class="abs" style="opacity:.999;left:254px;top:345px" width="15" height="17" viewBox="0 0 15 17">
<path d="M1.500.500h8.500l3.500 3.500v12h-12z" fill="#fff" stroke="#9ba0a8"/>
<path d="M1.500 16h12" stroke="#747c88" stroke-width="1"/>
<path d="M10 .500v3.500h3.500" fill="#f2f4f8" stroke="#9ba0a8" stroke-width=".8"/>
<text x="2.800" y="13.200" font-family="'Liberation Serif',serif" font-style="italic" font-weight="bold" font-size="12" fill="url(#og)">O</text>
</svg>
<span class="t" style="left:271.9px;top:347px;color:#000;letter-spacing:-0.057px">AdobeKaitiStd-Regular</span>
<span class="t" style="left:411.7px;top:347px;color:#000;letter-spacing:-0.766px;word-spacing:0.476px">16 553 KB</span>
<svg class="abs" style="opacity:.999;left:254px;top:365px" width="15" height="17" viewBox="0 0 15 17">
<path d="M1.500.500h8.500l3.500 3.500v12h-12z" fill="#fff" stroke="#9ba0a8"/>
<path d="M1.500 16h12" stroke="#747c88" stroke-width="1"/>
<path d="M10 .500v3.500h3.500" fill="#f2f4f8" stroke="#9ba0a8" stroke-width=".8"/>
<text x="2.800" y="13.200" font-family="'Liberation Serif',serif" font-style="italic" font-weight="bold" font-size="12" fill="url(#og)">O</text>
</svg>
<span class="t" style="left:271.9px;top:367px;color:#000;letter-spacing:0.149px">AdobeMingStd-Light</span>
<span class="t" style="left:411.7px;top:367px;color:#000;letter-spacing:-0.787px;word-spacing:0.498px">9 912 KB</span>
<svg class="abs" style="opacity:.999;left:254px;top:385px" width="15" height="17" viewBox="0 0 15 17">
<path d="M1.500.500h8.500l3.500 3.500v12h-12z" fill="#fff" stroke="#9ba0a8"/>
<path d="M1.500 16h12" stroke="#747c88" stroke-width="1"/>
<path d="M10 .500v3.500h3.500" fill="#f2f4f8" stroke="#9ba0a8" stroke-width=".8"/>
<text x="2.800" y="13.200" font-family="'Liberation Serif',serif" font-style="italic" font-weight="bold" font-size="12" fill="url(#og)">O</text>
</svg>
<span class="t" style="left:271.9px;top:387px;color:#000;letter-spacing:0.105px">AdobeMyungjoStd-M...</span>
<span class="t" style="left:411.7px;top:387px;color:#000;letter-spacing:-0.787px;word-spacing:0.498px">3 906 KB</span>
<svg class="abs" style="opacity:.999;left:254px;top:405px" width="15" height="17" viewBox="0 0 15 17">
<path d="M1.500.500h8.500l3.500 3.500v12h-12z" fill="#fff" stroke="#9ba0a8"/>
<path d="M1.500 16h12" stroke="#747c88" stroke-width="1"/>
<path d="M10 .500v3.500h3.500" fill="#f2f4f8" stroke="#9ba0a8" stroke-width=".8"/>
<text x="2.800" y="13.200" font-family="'Liberation Serif',serif" font-style="italic" font-weight="bold" font-size="12" fill="url(#og)">O</text>
</svg>
<span class="t" style="left:271.9px;top:407px;color:#000;letter-spacing:0.021px">AdobeSongStd-Light</span>
<span class="t" style="left:411.7px;top:407px;color:#000;letter-spacing:-0.766px;word-spacing:0.476px">15 223 KB</span>
<svg class="abs" style="left:255px;top:425px" width="15" height="17" viewBox="0 0 15 17">
<path d="M1.500.500h8.500l3.500 3.500v12h-12z" fill="#fff" stroke="#9ba0a8"/>
<path d="M1.500 16h12" stroke="#747c88" stroke-width="1"/>
<path d="M10 .500v3.500h3.500" fill="#f2f4f8" stroke="#9ba0a8" stroke-width=".8"/>
<text x="2.800" y="11.900" font-family="'Liberation Serif',serif" font-weight="bold" font-size="10" fill="#b4b4b8" stroke="#b4b4b8" stroke-width=".3">T</text>
<text x="5.600" y="13" font-family="'Liberation Serif',serif" font-weight="bold" font-size="10.500" fill="#2a4fd2" stroke="#2a4fd2" stroke-width=".45">T</text>
</svg>
<span class="t" style="left:271.9px;top:427px;color:#000;letter-spacing:-0.198px">AeroExtended</span>
<span class="t" style="left:411.7px;top:427px;color:#000;letter-spacing:-0.864px;word-spacing:0.575px">43 KB</span>
<svg class="abs" style="left:255px;top:445px" width="15" height="17" viewBox="0 0 15 17">
<path d="M1.500.500h8.500l3.500 3.500v12h-12z" fill="#fff" stroke="#9ba0a8"/>
<path d="M1.500 16h12" stroke="#747c88" stroke-width="1"/>
<path d="M10 .500v3.500h3.500" fill="#f2f4f8" stroke="#9ba0a8" stroke-width=".8"/>
<text x="2.800" y="11.900" font-family="'Liberation Serif',serif" font-weight="bold" font-size="10" fill="#b4b4b8" stroke="#b4b4b8" stroke-width=".3">T</text>
<text x="5.600" y="13" font-family="'Liberation Serif',serif" font-weight="bold" font-size="10.500" fill="#2a4fd2" stroke="#2a4fd2" stroke-width=".45">T</text>
</svg>
<span class="t" style="left:271.9px;top:447px;color:#000;letter-spacing:-0.129px;word-spacing:-0.160px">AeroExtended Italic</span>
<span class="t" style="left:411.7px;top:447px;color:#000;letter-spacing:-0.864px;word-spacing:0.575px">44 KB</span>
<svg class="abs" style="opacity:.999;left:254px;top:465px" width="15" height="17" viewBox="0 0 15 17">
<path d="M1.500.500h8.500l3.500 3.500v12h-12z" fill="#fff" stroke="#9ba0a8"/>
<path d="M1.500 16h12" stroke="#747c88" stroke-width="1"/>
<path d="M10 .500v3.500h3.500" fill="#f2f4f8" stroke="#9ba0a8" stroke-width=".8"/>
<text x="2.800" y="13.200" font-family="'Liberation Serif',serif" font-style="italic" font-weight="bold" font-size="12" fill="url(#og)">O</text>
</svg>
<span class="t" style="left:271.9px;top:467px;color:#000;letter-spacing:-0.073px">AGaramondPro-Bold</span>
<span class="t" style="left:411.7px;top:467px;color:#000;letter-spacing:-0.864px;word-spacing:0.575px">74 KB</span>
<svg class="abs" style="opacity:.999;left:254px;top:485px" width="15" height="17" viewBox="0 0 15 17">
<path d="M1.500.500h8.500l3.500 3.500v12h-12z" fill="#fff" stroke="#9ba0a8"/>
<path d="M1.500 16h12" stroke="#747c88" stroke-width="1"/>
<path d="M10 .500v3.500h3.500" fill="#f2f4f8" stroke="#9ba0a8" stroke-width=".8"/>
<text x="2.800" y="13.200" font-family="'Liberation Serif',serif" font-style="italic" font-weight="bold" font-size="12" fill="url(#og)">O</text>
</svg>
<span class="t" style="left:271.9px;top:487px;color:#000;letter-spacing:-0.085px">AGaramondPro-BoldIt...</span>
<span class="t" style="left:411.7px;top:487px;color:#000;letter-spacing:-0.864px;word-spacing:0.575px">76 KB</span>
<div style="position:absolute;left:254px;top:505px;width:15px;height:2px;overflow:hidden"><svg width="15" height="17" viewBox="0 0 15 17"><path d="M1.500.500h8.500l3.500 3.500v12.500h-12z" fill="#fff" stroke="#8e98a8"/></svg></div>
<div style="position:absolute;left:725px;top:119px;width:16px;height:388px;background:linear-gradient(90deg,#e9e9e9,#f1f1f1 30%,#f1f1f1)"></div>
<svg class="abs" style="left:729px;top:125px" width="9" height="6" viewBox="0 0 9 6"><path d="M4.500 1.200l3.700 4h-7.400z" fill="url(#ar)"/></svg>
<svg class="abs" style="left:729px;top:496px" width="9" height="6" viewBox="0 0 9 6"><path d="M.8.800h7.400l-3.700 4z" fill="url(#ar2)"/></svg>
<div class="thumb" style="left:725px;top:137px;width:13px;height:13px"></div>
</body></html>
